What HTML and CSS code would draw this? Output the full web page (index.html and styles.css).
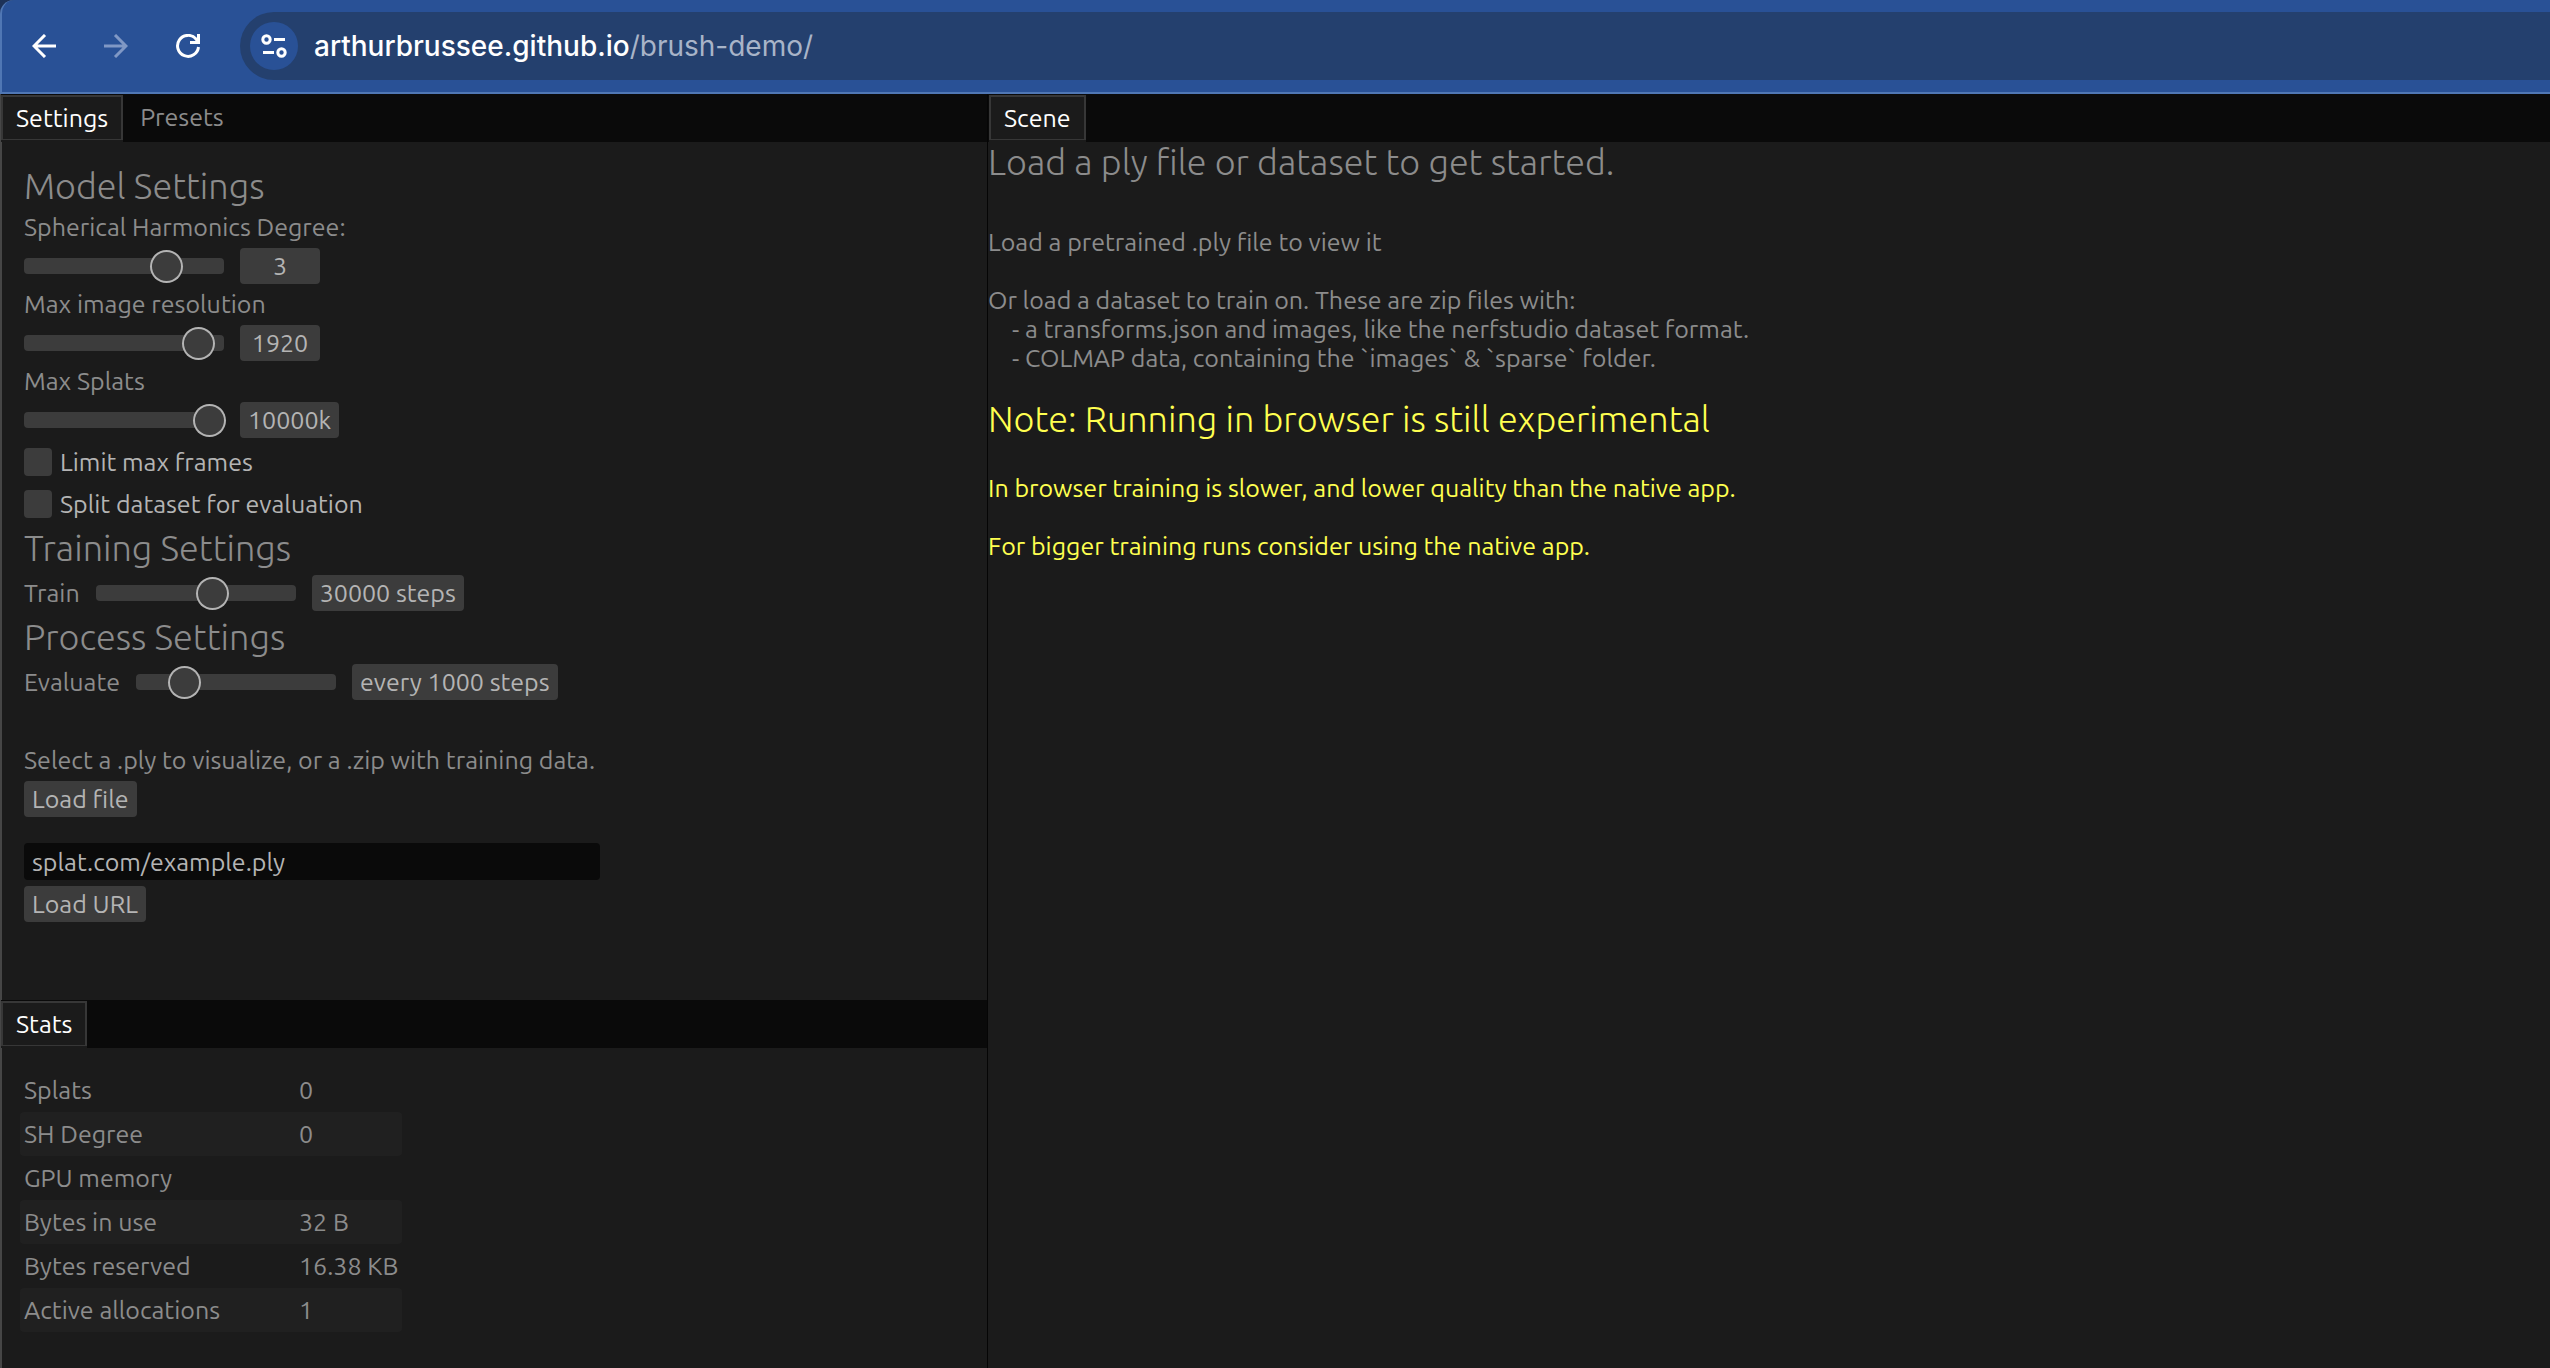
FILE: index.html
```html
<!DOCTYPE html>
<html lang="en">
<head>
<meta charset="utf-8">
<title>Brush</title>
<link rel="stylesheet" href="styles.css">
</head>
<body>
<div class="window">
  <header class="toolbar">
    <div class="toolbar-fill">
      <nav class="nav" aria-label="Browser">
        <button class="icon-button" type="button" aria-label="Back">
          <svg width="24" height="24" viewBox="0 0 24 24" fill="none" stroke="currentColor" stroke-width="3"><path d="M24 12H2M13 1L2 12L13 23"/></svg>
        </button>
        <button class="icon-button dim" type="button" aria-label="Forward">
          <svg width="24" height="24" viewBox="0 0 24 24" fill="none" stroke="currentColor" stroke-width="3"><path d="M0 12H22M11 1L22 12L11 23"/></svg>
        </button>
        <button class="icon-button" type="button" aria-label="Reload">
          <svg width="24" height="24" viewBox="0 0 24 24" fill="none" stroke="currentColor" stroke-width="3"><path d="M22.500 13A10.500 10.500 0 1 1 20 5L22 8"/><path d="M22.500 0V8.500H14"/></svg>
        </button>
      </nav>
      <div class="omnibox">
        <button class="site-info" type="button" aria-label="Site information">
          <svg width="26" height="24" viewBox="0 0 26 24" fill="none" stroke="currentColor" stroke-width="3"><circle cx="5.500" cy="5.500" r="3.700"/><path d="M13 5.500H24M2 18.500H13"/><circle cx="20.500" cy="18.500" r="3.700"/></svg>
        </button>
        <span class="url">arthurbrussee.github.io<span class="url-path">/brush-demo/</span></span>
      </div>
    </div>
  </header>

  <main class="app">
    <div class="side">
      <section class="pane">
        <div class="tabs" role="tablist">
          <button class="tab active" type="button" role="tab" aria-selected="true">Settings</button>
          <button class="tab" type="button" role="tab" aria-selected="false">Presets</button>
        </div>
        <form class="settings">
          <h2>Model Settings</h2>
          <label for="sh">Spherical Harmonics Degree:</label>
          <div class="row">
            <input class="slider" id="sh" type="range" min="0" max="4" value="3">
            <button class="value" type="button">3</button>
          </div>
          <label for="res">Max image resolution</label>
          <div class="row">
            <input class="slider" id="res" type="range" min="0" max="1000" value="936">
            <button class="value" type="button">1920</button>
          </div>
          <label for="splats">Max Splats</label>
          <div class="row">
            <input class="slider" id="splats" type="range" min="0" max="1000" value="1000">
            <button class="value" type="button">10000k</button>
          </div>
          <label class="check"><input type="checkbox">Limit max frames</label>
          <label class="check"><input type="checkbox">Split dataset for evaluation</label>
          <h2>Training Settings</h2>
          <div class="row">
            <label for="train">Train</label>
            <input class="slider" id="train" type="range" min="0" max="1000" value="600">
            <button class="value" type="button">30000 steps</button>
          </div>
          <h2>Process Settings</h2>
          <div class="row">
            <label for="eval">Evaluate</label>
            <input class="slider" id="eval" type="range" min="0" max="1000" value="196">
            <button class="value" type="button">every 1000 steps</button>
          </div>
          <div class="group">
            <p>Select a .ply to visualize, or a .zip with training data.</p>
            <button class="button" type="button">Load file</button>
          </div>
          <div class="group url-group">
            <input class="text-field" type="text" value="splat.com/example.ply" aria-label="URL">
            <button class="button" type="button">Load URL</button>
          </div>
        </form>
      </section>

      <section class="pane">
        <div class="tabs" role="tablist">
          <button class="tab active" type="button" role="tab" aria-selected="true">Stats</button>
        </div>
        <table class="stats">
          <tbody>
            <tr><th scope="row">Splats</th><td>0</td></tr>
            <tr><th scope="row">SH Degree</th><td>0</td></tr>
            <tr><th scope="row">GPU memory</th><td></td></tr>
            <tr><th scope="row">Bytes in use</th><td>32 B</td></tr>
            <tr><th scope="row">Bytes reserved</th><td>16.38 KB</td></tr>
            <tr><th scope="row">Active allocations</th><td>1</td></tr>
          </tbody>
        </table>
      </section>
    </div>

    <section class="pane scene">
      <div class="tabs" role="tablist">
        <button class="tab active" type="button" role="tab" aria-selected="true">Scene</button>
      </div>
      <h1>Load a ply file or dataset to get started.</h1>
      <p class="intro">Load a pretrained .ply file to view it</p>
      <p>Or load a dataset to train on. These are zip files with:</p>
      <ul>
        <li>- a transforms.json and images, like the nerfstudio dataset format.</li>
        <li>- COLMAP data, containing the `images` &amp; `sparse` folder.</li>
      </ul>
      <div class="warning">
        <h2>Note: Running in browser is still experimental</h2>
        <p>In browser training is slower, and lower quality than the native app.</p>
        <p>For bigger training runs consider using the native app.</p>
      </div>
    </section>
  </main>
</div>
</body>
</html>
```
FILE: styles.css
```css
:root {
  --panel: #1b1b1b;
  --bar: #0a0a0a;
  --control: #3c3c3c;
  --text: #8c8c8c;
  --text-strong: #b4b4b4;
  --blue: #295196;
}

* { box-sizing: border-box; }

body {
  margin: 0;
  background: var(--panel);
  color: var(--text);
  font: 400 25px/29px Ubuntu, "Open Sans", sans-serif;
}

h1, h2, p, ul { margin: 0; padding: 0; }

h1, h2 {
  padding-bottom: 2px;
  font-size: 36px;
  font-weight: 300;
  line-height: 39px;
}

ul { list-style: none; }

button, input {
  margin: 0;
  padding: 0;
  border: 0;
  color: var(--text-strong);
  font: inherit;
}

.window {
  display: flex;
  flex-direction: column;
  min-height: 100vh;
}

/* Browser toolbar */
.toolbar { background: #1d3258; color: #fff; }

.toolbar-fill {
  display: flex;
  align-items: center;
  gap: 36px;
  height: 94px;
  padding-left: 30px;
  background: var(--blue);
  border-left: 2px solid #5077b4;
  border-bottom: 2px solid #5077b4;
  border-top-left-radius: 14px;
}

.nav { display: flex; gap: 44px; }

.icon-button {
  display: flex;
  width: 28px;
  background: none;
  color: #fff;
}

.icon-button.dim { color: #8098c5; }

.omnibox {
  display: flex;
  flex: 1;
  align-items: center;
  gap: 16px;
  height: 68px;
  padding-left: 10px;
  background: #24406e;
  border-radius: 34px 0 0 34px;
}

.site-info {
  display: grid;
  place-items: center;
  width: 48px;
  height: 48px;
  border-radius: 50%;
  background: var(--blue);
  color: #fff;
}

.url { font: 500 28px/36px Inter, sans-serif; }
.url-path { color: #a8b4c8; font-weight: 400; }

/* Docked panes */
.app {
  display: grid;
  flex: 1;
  grid-template-columns: 987fr 1563fr;
}

.side {
  display: grid;
  grid-template-rows: 906fr 368fr;
  border-left: 2px solid #464646;
}

.scene { border-left: 1px solid #050505; }

.tabs {
  display: flex;
  height: 48px;
  padding-top: 1px;
  background: var(--bar);
}

.side .tabs { margin-left: -1px; }
.scene .tabs { padding-left: 1px; }

.tab {
  height: 45px;
  padding: 0 17px;
  background: none;
  color: var(--text);
}

.tab.active {
  padding: 0 13px;
  border: 2px solid #373737;
  border-bottom-width: 1px;
  background: var(--panel);
  box-shadow: 0 2px 0 var(--panel);
  color: #fff;
}

/* Settings form */
.settings {
  display: flex;
  flex-direction: column;
  align-items: flex-start;
  gap: 6px;
  padding: 24px 22px;
}

.row {
  display: flex;
  align-items: center;
  gap: 16px;
  height: 36px;
}

.slider {
  width: 200px;
  height: 16px;
  border-radius: 4px;
  background: var(--control);
  appearance: none;
}

.slider::-webkit-slider-thumb {
  width: 29px;
  height: 29px;
  border-radius: 50%;
  background: var(--control);
  box-shadow: 0 0 0 2px var(--text-strong);
  appearance: none;
}

.value, .button {
  height: 36px;
  padding: 0 8px;
  border-radius: 4px;
  background: var(--control);
}

.value { min-width: 80px; }

.check {
  display: flex;
  align-items: center;
  gap: 8px;
  height: 36px;
  color: var(--text-strong);
}

.check input {
  width: 28px;
  height: 28px;
  border-radius: 4px;
  background: var(--control);
  appearance: none;
}

.group {
  display: flex;
  flex-direction: column;
  align-items: flex-start;
  gap: 6px;
  padding-top: 40px;
}

.url-group { padding-top: 20px; }

.text-field {
  width: 576px;
  height: 37px;
  padding: 0 8px;
  border-radius: 4px;
  background: var(--bar);
}

/* Statistics */
.stats {
  margin: 20px 18px;
  border-collapse: separate;
  border-spacing: 0;
}

.stats th, .stats td { height: 44px; padding: 0 4px; }

.stats th {
  width: 275px;
  border-radius: 4px 0 0 4px;
  font-weight: inherit;
  text-align: left;
}

.stats td {
  width: 106px;
  border-radius: 0 4px 4px 0;
  white-space: nowrap;
}

.stats tr:nth-child(even) > * { background: #202020; }

/* Scene */
.intro { margin: 45px 0 29px; }
.scene li { padding-left: 24px; }
.warning { margin-top: 26px; color: #ffff50; }
.warning h2 { margin-bottom: 34px; }
.warning p + p { margin-top: 29px; }
```
